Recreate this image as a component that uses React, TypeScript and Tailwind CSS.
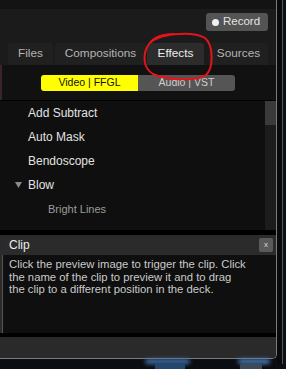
import React from "react";

const items = ["Add Subtract", "Auto Mask", "Bendoscope"];

export default function App() {
  return (
    <div
      className="w-[286px] h-[369px] overflow-hidden bg-[#0a0d11] relative flex"
      style={{ fontFamily: '"Liberation Sans", Arial, sans-serif' }}
    >
      <div className="w-[277px] flex flex-col shrink-0">
        <div className="h-[359px] flex flex-col bg-[#111] border-r border-b border-[#7c7c7c] rounded-br-[5px] overflow-hidden">
          {/* top bar */}
          <div className="h-[43px] bg-[#1b1b1b] flex flex-col">
            <div className="h-[9px] bg-[#131313]" />
            <div className="flex justify-end pr-[8px] pt-[4px]">
              <div className="w-[62px] h-[18px] rounded-[3px] bg-[#545454] flex items-center pl-[6px] gap-[4px]">
                <div className="w-[7px] h-[7px] rounded-full bg-[#f2f2f2]" />
                <span className="text-[11.5px] text-[#e4e4e4] leading-none">Record</span>
              </div>
            </div>
          </div>
          {/* tabs */}
          <div className="h-[22px] bg-[#1b1b1b] flex items-end pl-[8px]">
            <div className="w-[45px] h-[22px] rounded-t-[3px] bg-[#202020] flex items-center justify-center text-[11.8px] text-[#b4b4b4]">Files</div>
            <div className="ml-[2px] w-[91px] h-[22px] rounded-t-[3px] bg-[#202020] flex items-center justify-center text-[11.8px] text-[#b4b4b4]">Compositions</div>
            <div className="ml-[1px] w-[57px] h-[22px] rounded-t-[3px] bg-[#2c2c2c] flex items-center justify-center text-[11.8px] text-[#ececec]">Effects</div>
            <div className="ml-[5px] w-[59px] h-[22px] rounded-t-[3px] bg-[#202020] flex items-center justify-center text-[11.8px] text-[#b4b4b4]">Sources</div>
          </div>
          {/* toggle area */}
          <div className="h-[35px] bg-[#111] flex pt-[10px] pl-[41px] border-l-[2px] border-[#3a2428]">
            <div className="flex h-[16px] rounded-[3px] overflow-hidden -ml-[2px]">
              <div className="w-[97px] bg-[#ffff00] text-[#111] text-[10.5px] flex items-center justify-center">Video | FFGL</div>
              <div className="w-[97px] bg-[#555] text-[#cfcfcf] text-[10.5px] flex items-center justify-center">Audio | VST</div>
            </div>
          </div>
          {/* list */}
          <div className="h-[130px] border-t border-[#000] bg-[#0f0f0f] flex">
            <div className="flex-1 flex flex-col">
              {items.map((t) => (
                <div key={t} className="h-[24px] flex items-center pl-[28px] text-[12px] text-[#e2e2e2]">{t}</div>
              ))}
              <div className="h-[24px] flex items-center pl-[15px] text-[12px] text-[#e2e2e2]">
                <svg width="7" height="6" viewBox="0 0 7 6" className="mr-[6px]">
                  <path d="M0 0 L7 0 L3.5 6 Z" fill="#8a8a8a" />
                </svg>
                Blow
              </div>
              <div className="h-[25px] flex items-center pl-[48px] text-[11px] text-[#9c9c9c]">Bright Lines</div>
            </div>
            <div className="w-[11px] bg-[#1c1c1c] flex flex-col">
              <div className="h-[24px] bg-[#3a3a3a]" />
            </div>
          </div>
          <div className="h-[5px] bg-[#000]" />
          {/* clip panel */}
          <div className="flex flex-col border-l-[3px] border-[#2a2a2a] bg-[#0f0f0f]">
            <div className="h-[20px] bg-[#2b2b2b] flex items-center justify-between pl-[6px] pr-[3px]">
              <span className="text-[12px] text-[#ececec]">Clip</span>
              <div className="w-[14px] h-[14px] rounded-[2px] bg-[#5a5a5a] flex items-center justify-center text-[8px] text-[#d8d8d8] leading-none">x</div>
            </div>
            <div className="h-[78px] pl-[6px] pt-[3px] text-[11.3px] leading-[12.5px] text-[#cacaca] whitespace-nowrap border-l border-[#555] -ml-[1px]">
              Click the preview image to trigger the clip. Click
              <br />
              the name of the clip to preview it and to drag
              <br />
              the clip to a different position in the deck.
            </div>
          </div>
          <div className="h-[4px] bg-[#000]" />
          <div className="flex-1 bg-[#2a2a2a]" />
        </div>
        {/* bottom glow strip */}
        <div className="flex-1 relative">
          <div className="absolute left-[145px] top-[0px] w-[45px] h-[5px] rounded-full bg-[#3f6fa8] blur-[2px]" />
          <div className="absolute left-[238px] top-[0px] w-[32px] h-[5px] rounded-full bg-[#4b7cb6] blur-[2px]" />
          <div className="absolute left-[155px] top-[5px] w-[30px] h-[5px] bg-[#24466e]" />
          <div className="absolute left-[240px] top-[5px] w-[22px] h-[5px] bg-[#3d4a58]" />
        </div>
      </div>
      {/* right frame */}
      <div className="w-[5px] h-[364px] bg-[#090909]" />
      <div className="w-[1px] h-[364px] bg-[#4e5660]" />
      <div className="flex-1 bg-[#0c1016]" />

      {/* red annotation circle */}
      <svg className="absolute left-0 top-0 pointer-events-none" width="286" height="369">
        <path
          d="M149 44 C157 34 191 30 205 38 C214 46 213 67 207 74 C200 81 168 81 153 74 C143 68 142 54 149 44 C154 37 164 34 174 34"
          fill="none"
          stroke="#e3141b"
          strokeWidth="2"
          strokeLinecap="round"
        />
      </svg>
    </div>
  );
}
